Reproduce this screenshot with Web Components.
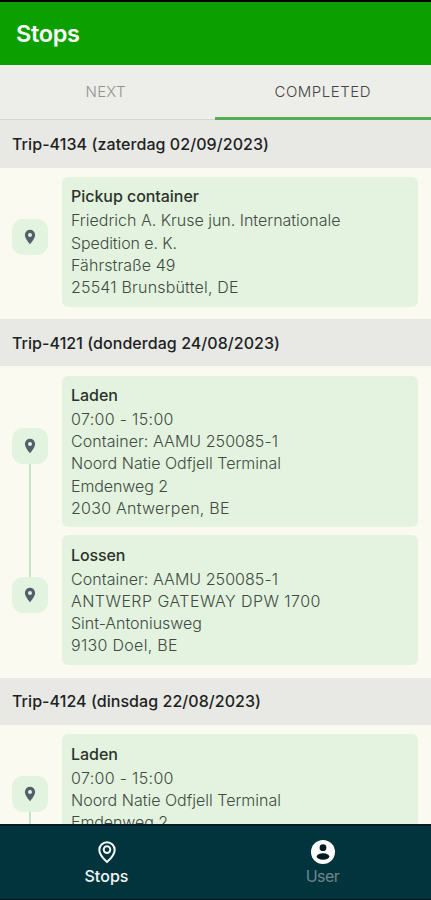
<!DOCTYPE html>
<html lang="nl">
<head>
<meta charset="utf-8">
<title>Stops</title>
<style>
html,body{margin:0;height:100%;overflow:hidden;background:#fbfaf1}
body{font-family:Inter,"Liberation Sans",sans-serif}
</style>
</head>
<body>
<stops-app></stops-app>
<script>
const define = (name, html, setup) => customElements.define(name, class extends HTMLElement {
  constructor() {
    super();
    const t = document.createElement('template');
    t.innerHTML = html;
    this.attachShadow({ mode: 'open' }).append(t.content.cloneNode(true));
  }
  connectedCallback() { if (setup) setup(this, this.shadowRoot); }
});

// One line of text, tracked so that it spans the width given in its "w" attribute.
define('fit-line', `<style>:host{display:block;white-space:nowrap}span{display:inline-block}</style><span><slot></slot></span>`,
  (el, root) => requestAnimationFrame(() => fit(el, root)));
function fit(el, root) {
  const span = root.querySelector('span'), n = el.textContent.length;
  span.style.letterSpacing = '0px';
  const d = (Number(el.getAttribute('w')) - span.getBoundingClientRect().width) / (n - 1);
  span.style.letterSpacing = d.toFixed(3) + 'px';
  span.style.marginRight = (-d).toFixed(3) + 'px';
}

define('app-header', `<style>
:host{display:flex;align-items:center;box-sizing:border-box;border-top:2px solid #000;height:65px;padding:0 16px;background:#0b9f00;color:#fff;font-weight:620;font-size:23.5px;line-height:30px}
</style><slot></slot>`);

define('tab-item', `<style>
:host{flex:0 0 215px;display:flex;align-items:center;justify-content:center;box-sizing:border-box;height:55.400px;padding:0 4px 1px 0;border-bottom:1px solid #d5d7d1;color:#90928f;font-size:15px;font-weight:350}
:host([active]){flex:1;border-bottom:3px solid #53ad53;color:#444743;padding:1.5px 1px 0 0}
</style><slot></slot>`);
define('tab-bar', `<style>:host{display:flex;background:#edeeea}</style><slot></slot>`);

define('trip-section', `<style>
:host{display:block}
header{display:flex;align-items:center;height:47.3px;box-sizing:border-box;padding:0 12px .4px;background:#e8e9e5;color:#20221f;font-size:16px;font-weight:520;line-height:20px}
div{display:flex;flex-direction:column;gap:8px;padding:9.1px 13px 12.600px 12px}
</style><header><slot name="title"></slot></header><div><slot></slot></div>`);

define('stop-item', `<style>
:host{display:flex;gap:13.5px}
.rail{width:36px;display:flex;flex-direction:column;align-items:center}
.rail::before{content:"";flex:1 0 0}
.rail::after{content:"";flex:1 0 10px;width:1.7px}
:host([linked]) .rail{margin-bottom:-8px}
:host([linked]) .rail::after{flex-basis:18px;background:#c3e5c5}
:host([joined]) .rail::before{width:1.7px;background:#c3e5c5}
.pin{flex:none;width:36px;height:36px;border-radius:11px;background:#e2f3e0;display:grid;place-items:center}
.card{flex:1;min-width:0;box-sizing:border-box;min-height:129.800px;padding:8.6px 9.5px;border-radius:6px;background:#e3f3e0;font-size:16px;line-height:22.1px;font-weight:320;color:#414b40}
::slotted([slot=name]){font-weight:540;color:#2c332b;margin-bottom:2px}
</style>
<div class="rail"><div class="pin"><svg width="12" height="16" viewBox="0 0 12 16"><path fill="#52606a" fill-rule="evenodd" d="M6 .8A5.1 5.1 0 0 0 .9 5.9C.9 9.5 6 15.2 6 15.2S11.100 9.500 11.100 5.900A5.100 5.100 0 0 0 6 .8ZM6 3.900a2 2 0 1 1 0 4a2 2 0 0 1 0-4Z"/></svg></div></div>
<div class="card"><slot name="name"></slot><slot></slot></div>`);

define('nav-item', `<style>
:host{flex:1;display:flex;flex-direction:column;align-items:center;padding-top:12px;color:#71858b;font-size:16px;line-height:20px;font-weight:400}
:host([active]){flex:0 0 213px;color:#f4f7f7;font-weight:480}
.icon{height:28px;display:grid;place-items:center;margin-bottom:.4px}
</style><div class="icon"><slot name="icon"></slot></div><slot></slot>`);
define('nav-bar', `<style>:host{display:flex;box-sizing:border-box;height:76px;padding-left:0;background:#02343d;border-top:2px solid #061b24;border-bottom:1px solid #06141a}::slotted(:last-child){padding-left:1.5px}</style><slot></slot>`);

define('stops-app', `<style>
:host{display:flex;flex-direction:column;height:100vh;background:#fbfaf1}
app-header,tab-bar,nav-bar{flex:none}
main{flex:1;min-height:0;overflow:hidden}
svg{display:block}
</style>
<app-header><fit-line w="64">Stops</fit-line></app-header>
<tab-bar><tab-item><fit-line w="40">NEXT</fit-line></tab-item><tab-item active><fit-line w="96">COMPLETED</fit-line></tab-item></tab-bar>
<main>
<trip-section><fit-line slot="title" w="257">Trip-4134 (zaterdag 02/09/2023)</fit-line>
<stop-item><fit-line slot="name" w="128">Pickup container</fit-line><fit-line w="269.500">Friedrich A. Kruse jun. Internationale</fit-line><fit-line w="106">Spedition e. K.</fit-line><fit-line w="104.500">Fährstraße 49</fit-line><fit-line w="167.500">25541 Brunsbüttel, DE</fit-line></stop-item>
</trip-section>
<trip-section><fit-line slot="title" w="268">Trip-4121 (donderdag 24/08/2023)</fit-line>
<stop-item linked><fit-line slot="name" w="47">Laden</fit-line><fit-line w="102.500">07:00 - 15:00</fit-line><fit-line w="207">Container: AAMU 250085-1</fit-line><fit-line w="210">Noord Natie Odfjell Terminal</fit-line><fit-line w="97">Emdenweg 2</fit-line><fit-line w="158.500">2030 Antwerpen, BE</fit-line></stop-item>
<stop-item joined><fit-line slot="name" w="54.500">Lossen</fit-line><fit-line w="207">Container: AAMU 250085-1</fit-line><fit-line w="249.500">ANTWERP GATEWAY DPW 1700</fit-line><fit-line w="131">Sint-Antoniusweg</fit-line><fit-line w="106.500">9130 Doel, BE</fit-line></stop-item>
</trip-section>
<trip-section><fit-line slot="title" w="249">Trip-4124 (dinsdag 22/08/2023)</fit-line>
<stop-item linked><fit-line slot="name" w="47">Laden</fit-line><fit-line w="102.500">07:00 - 15:00</fit-line><fit-line w="210">Noord Natie Odfjell Terminal</fit-line><fit-line w="97">Emdenweg 2</fit-line></stop-item>
</trip-section>
</main>
<nav-bar>
<nav-item active><svg slot="icon" width="20" height="24" viewBox="0 0 20 24" fill="none" stroke="#f4f7f7" stroke-width="2"><path d="M10 2.200A7.700 7.700 0 0 0 2.300 9.900C2.300 15 10 22 10 22S17.700 15 17.700 9.900A7.700 7.700 0 0 0 10 2.200Z"/><circle cx="10" cy="9.600" r="3.300"/></svg><fit-line w="44">Stops</fit-line></nav-item>
<nav-item><svg slot="icon" width="26" height="26" viewBox="0 0 26 26"><circle cx="13" cy="13" r="12" fill="#fff"/><circle cx="13" cy="8.700" r="3.400" fill="#061c22"/><ellipse cx="13" cy="17.500" rx="6.300" ry="3.200" fill="#061c22"/></svg><fit-line w="34">User</fit-line></nav-item>
</nav-bar>`);
</script>
</body>
</html>
